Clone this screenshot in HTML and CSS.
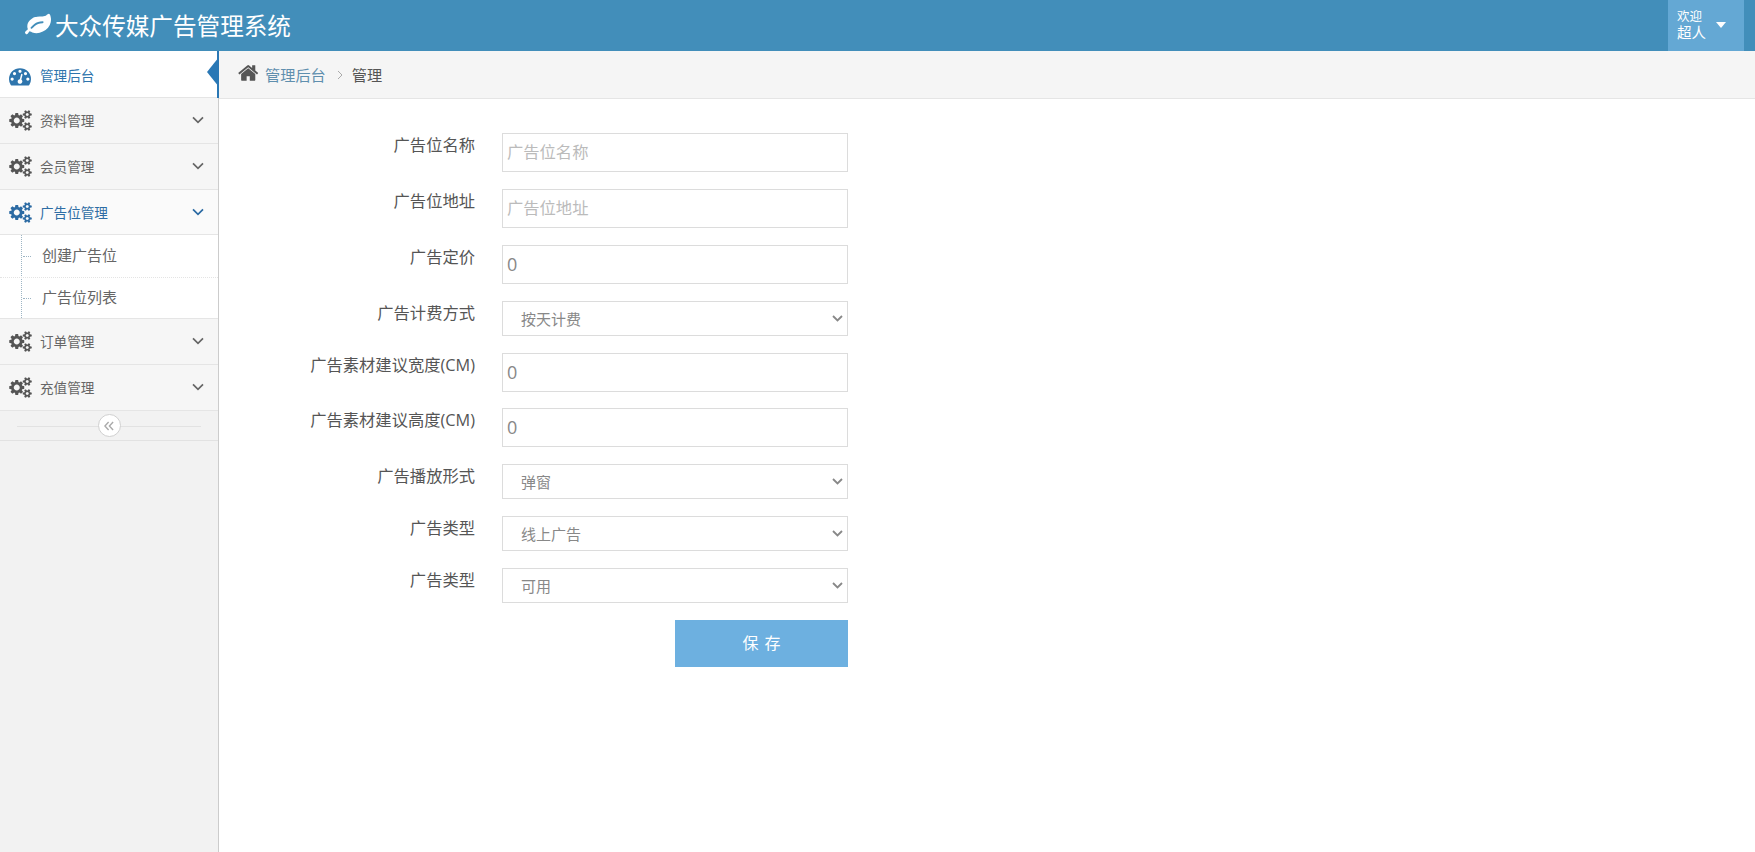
FILE: index.html
```html
<!DOCTYPE html>
<html lang="zh-CN">
<head>
<meta charset="utf-8">
<title>大众传媒广告管理系统</title>
<link rel="stylesheet" href="styles.css">
</head>
<body>
<header class="topbar">
  <div class="brand">
    <svg class="brand-leaf" viewBox="0 0 1792 1792"><path d="M1280 704q0-26-19-45t-45-19q-172 0-318 49.5t-259.5 134-235.5 219.5q-19 21-19 45 0 26 19 45t45 19q24 0 45-19 27-24 74-71t67-66q137-124 268.5-176t313.5-52q26 0 45-19t19-45zm512-198q0 95-20 193-46 224-184.5 383t-357.5 268q-214 108-438 108-148 0-286-47-15-5-88-42t-96-37q-16 0-39.5 32t-45 70-52.5 70-60 32q-30 0-51-11t-31-24-27-42q-2-4-6-11t-5.5-10-3-9.5-1.5-13.5q0-35 31-73.5t68-65.5 68-56 31-48q0-4-14-38t-16-44q-9-51-9-104 0-115 43.5-220t119-184.5 170.5-139 204-95.5q55-18 145-25.5t179.5-9 178.5-6 163.5-24 113.5-56.5l29.5-29.5 29.5-28 27-20 36.5-16 43.5-4.5q39 0 70.5 46t47.5 112 24 124 8 96z"/></svg>
    <span>大众传媒广告管理系统</span>
  </div>
  <div class="user">
    <div class="user-text"><span class="user-hi">欢迎</span><span class="user-name">超人</span></div>
    <span class="caret"></span>
  </div>
</header>
<div class="layout">
  <aside class="sidebar">
    <svg class="defs" width="0" height="0">
      <defs>
        <symbol id="cogs" viewBox="0 0 1920 1792"><path d="M896 896q0-106-75-181t-181-75-181 75-75 181 75 181 181 75 181-75 75-181zm768 512q0-52-38-90t-90-38-90 38-38 90q0 53 37.5 90.5t90.5 37.5 90.5-37.5 37.5-90.5zm0-1024q0-52-38-90t-90-38-90 38-38 90q0 53 37.5 90.5t90.5 37.5 90.5-37.5 37.5-90.5zm-384 421v185q0 10-7 19.5t-16 10.5l-155 24q-11 35-32 76 34 48 90 115 7 11 7 20 0 12-7 19-23 30-82.5 89.5t-78.5 59.5q-11 0-21-7l-115-90q-37 19-77 31-11 108-23 155-7 24-30 24h-186q-11 0-20-7.5t-10-17.5l-23-153q-34-10-75-31l-118 89q-7 7-20 7-11 0-21-8-144-133-144-160 0-9 7-19 10-14 41-53t47-61q-23-44-35-82l-152-24q-10-1-17-9.5t-7-19.5v-185q0-10 7-19.5t16-10.5l155-24q11-35 32-76-34-48-90-115-7-11-7-20 0-12 7-20 22-30 82-89t79-59q11 0 21 7l115 90q34-18 77-32 11-108 23-154 7-24 30-24h186q11 0 20 7.5t10 17.5l23 153q34 10 75 31l118-89q8-7 20-7 11 0 21 8 144 133 144 160 0 8-7 19-12 16-42 54t-45 60q23 48 34 82l152 23q10 2 17 10.5t7 19.5zm640 533v140q0 16-149 31-12 27-30 52 51 113 51 138 0 4-4 7-122 71-124 71-8 0-46-47t-52-68q-20 2-30 2t-30-2q-14 21-52 68t-46 47q-2 0-124-71-4-3-4-7 0-25 51-138-18-25-30-52-149-15-149-31v-140q0-16 149-31 13-29 30-52-51-113-51-138 0-4 4-7 4-2 35-20t59-34 30-16q8 0 46 46.5t52 67.5q20-2 30-2t30 2q51-71 92-112l6-2q4 0 124 70 4 3 4 7 0 25-51 138 17 23 30 52 149 15 149 31zm0-1024v140q0 16-149 31-12 27-30 52 51 113 51 138 0 4-4 7-122 71-124 71-8 0-46-47t-52-68q-20 2-30 2t-30-2q-14 21-52 68t-46 47q-2 0-124-71-4-3-4-7 0-25 51-138-18-25-30-52-149-15-149-31v-140q0-16 149-31 13-29 30-52-51-113-51-138 0-4 4-7 4-2 35-20t59-34 30-16q8 0 46 46.5t52 67.5q20-2 30-2t30 2q51-71 92-112l6-2q4 0 124 70 4 3 4 7 0 25-51 138 17 23 30 52 149 15 149 31z"/></symbol>
        <symbol id="chev" viewBox="0 0 12 8"><path d="M1 1.3 6 6.3 11 1.3" fill="none" stroke="currentColor" stroke-width="1.7"/></symbol>
      </defs>
    </svg>
    <nav>
      <a class="menu-item menu-home">
        <svg class="menu-icon" viewBox="0 0 1792 1792"><path d="M384 1152q0-53-37.5-90.5t-90.5-37.5-90.5 37.5-37.5 90.5 37.5 90.5 90.5 37.5 90.5-37.5 37.5-90.5zm192-448q0-53-37.5-90.5t-90.5-37.5-90.5 37.5-37.5 90.5 37.5 90.5 90.5 37.5 90.5-37.5 37.5-90.5zm428 481l101-382q6-26-7.5-48.5t-38.5-29.5-48 6.5-30 39.5l-101 382q-60 5-107 43.5t-63 98.5q-20 77 20 146t117 89 146-20 89-117q16-60-6-117t-72-91zm660-33q0-53-37.5-90.5t-90.5-37.5-90.5 37.5-37.5 90.5 37.5 90.5 90.5 37.5 90.5-37.5 37.5-90.5zm-640-640q0-53-37.5-90.5t-90.5-37.5-90.5 37.5-37.5 90.5 37.5 90.5 90.5 37.5 90.5-37.5 37.5-90.5zm448 192q0-53-37.5-90.5t-90.5-37.5-90.5 37.5-37.5 90.5 37.5 90.5 90.5 37.5 90.5-37.5 37.5-90.5zm320 448q0 261-141 483-19 29-54 29h-1402q-35 0-54-29-141-221-141-483 0-182 71-348t191-286 286-191 348-71 348 71 286 191 191 286 71 348z"/></svg>
        <span class="menu-text">管理后台</span>
        <span class="menu-arrow"></span>
      </a>
      <a class="menu-item"><svg class="menu-icon"><use href="#cogs"/></svg><span class="menu-text">资料管理</span><svg class="chev"><use href="#chev"/></svg></a>
      <a class="menu-item"><svg class="menu-icon"><use href="#cogs"/></svg><span class="menu-text">会员管理</span><svg class="chev"><use href="#chev"/></svg></a>
      <a class="menu-item menu-open"><svg class="menu-icon"><use href="#cogs"/></svg><span class="menu-text">广告位管理</span><svg class="chev"><use href="#chev"/></svg></a>
      <ul class="submenu">
        <li class="sub-item">创建广告位</li>
        <li class="sub-item">广告位列表</li>
      </ul>
      <a class="menu-item"><svg class="menu-icon"><use href="#cogs"/></svg><span class="menu-text">订单管理</span><svg class="chev"><use href="#chev"/></svg></a>
      <a class="menu-item"><svg class="menu-icon"><use href="#cogs"/></svg><span class="menu-text">充值管理</span><svg class="chev"><use href="#chev"/></svg></a>
    </nav>
    <div class="collapse">
      <span class="collapse-btn"><svg viewBox="0 0 10 10"><path d="M4.6 1 .9 5 4.6 9M9.1 1 5.4 5 9.1 9" fill="none" stroke="currentColor" stroke-width="1.4"/></svg></span>
    </div>
  </aside>
  <main class="main">
    <div class="crumbs">
      <svg class="crumb-home" viewBox="0 0 1792 1792"><path d="M1408 992v480q0 26-19 45t-45 19h-384v-384h-256v384h-384q-26 0-45-19t-19-45v-480q0-1 .5-3t.5-3l575-474 575 474q1 2 1 6zm223-69l-62 74q-8 9-21 11h-3q-13 0-21-7l-692-577-692 577q-12 8-24 7-13-2-21-11l-62-74q-8-10-7-23.5t11-21.5l719-599q32-26 76-26t76 26l244 204v-195q0-14 9-23t23-9h192q14 0 23 9t9 23v408l219 182q10 8 11 21.5t-7 23.5z"/></svg>
      <a class="crumb-link">管理后台</a>
      <svg class="crumb-sep" viewBox="0 0 6 10"><path d="M1 1 5 5 1 9" fill="none" stroke="currentColor" stroke-width="1"/></svg>
      <span class="crumb-current">管理</span>
    </div>
    <form class="form">
      <div class="row"><label class="label">广告位名称</label><input class="field" placeholder="广告位名称"></div>
      <div class="row"><label class="label">广告位地址</label><input class="field" placeholder="广告位地址"></div>
      <div class="row"><label class="label">广告定价</label><input class="field field-num" value="0"></div>
      <div class="row row-select"><label class="label">广告计费方式</label><select class="field select"><option>按天计费</option></select></div>
      <div class="row row-tight"><label class="label">广告素材建议宽度(CM)</label><input class="field field-num" value="0"></div>
      <div class="row"><label class="label">广告素材建议高度(CM)</label><input class="field field-num" value="0"></div>
      <div class="row row-select"><label class="label">广告播放形式</label><select class="field select"><option>弹窗</option></select></div>
      <div class="row row-select"><label class="label">广告类型</label><select class="field select"><option>线上广告</option></select></div>
      <div class="row row-select"><label class="label">广告类型</label><select class="field select"><option>可用</option></select></div>
      <div class="actions"><button class="save" type="button">保 存</button></div>
    </form>
  </main>
</div>
</body>
</html>
```

FILE: styles.css
```css
* { box-sizing: border-box; }
html, body { height: 100%; }
body {
  margin: 0;
  font-family: "Open Sans", "Noto Sans CJK SC", sans-serif;
  color: #555;
  background: #fff;
  overflow: hidden;
}
a { text-decoration: none; }
ul { list-style: none; margin: 0; padding: 0; }

.topbar {
  height: 51px;
  background: #428eba;
  display: flex;
  align-items: center;
  justify-content: space-between;
  padding: 0 11px 0 25px;
}
.brand {
  display: flex;
  align-items: center;
  color: #fff;
  font-size: 23.6px;
  gap: 4px;
  padding-bottom: 2px;
}
.brand-leaf { width: 26px; height: 26px; fill: #fff; }
.user {
  width: 76px;
  height: 51px;
  background: #64a8d4;
  color: #fff;
  display: flex;
  align-items: center;
  padding: 0 0 2px 9px;
  gap: 10px;
}
.user-text { display: flex; flex-direction: column; }
.user-hi { font-size: 12.5px; line-height: 15px; }
.user-name { font-size: 14.5px; line-height: 17px; }
.caret {
  width: 0;
  height: 0;
  border-left: 5.5px solid transparent;
  border-right: 5.5px solid transparent;
  border-top: 6px solid #fff;
}

.layout { display: flex; height: 801px; }
.sidebar {
  width: 219px;
  flex: none;
  background: #f2f2f2;
  border-right: 1px solid #ccc;
}
.defs { position: absolute; }
.menu-item {
  position: relative;
  display: flex;
  align-items: center;
  height: 46px;
  padding-left: 9px;
  background: #f6f6f6;
  border-bottom: 1px solid #e5e5e5;
  color: #666;
  font-size: 13.6px;
}
.menu-icon { width: 23px; height: 21px; fill: #555; flex: none; }
.menu-text { margin-left: 8px; padding-bottom: 1px; }
.chev { position: absolute; right: 14px; top: 18px; width: 12px; height: 8px; color: #666; }
.menu-home { height: 47px; background: #fff; color: #2e75ad; }
.menu-home::after {
  content: "";
  position: absolute;
  right: -1px;
  top: 0;
  bottom: -1px;
  width: 2px;
  background: #2a78b5;
}
.menu-home .menu-icon { width: 22px; height: 22px; fill: #2e75ad; margin: 3px 1px 0 0; }
.menu-home .menu-text { padding: 2px 0 0; }
.menu-arrow {
  position: absolute;
  right: -1px;
  top: 6px;
  width: 0;
  height: 0;
  border-top: 15px solid transparent;
  border-bottom: 15px solid transparent;
  border-right: 12px solid #2a78b5;
}
.menu-open { height: 45px; background: #fafafa; color: #2e6da4; }
.menu-open .menu-icon { fill: #2b6aa3; }
.menu-open .chev { color: #2b6aa3; }
.submenu {
  position: relative;
  background: #fff;
  border-bottom: 1px solid #e5e5e5;
}
.submenu::before {
  content: "";
  position: absolute;
  left: 21px;
  top: 0;
  bottom: 0;
  border-left: 1px dotted #9db5c4;
}
.sub-item {
  position: relative;
  height: 40px;
  display: flex;
  align-items: center;
  padding: 0 0 4px 42px;
  font-size: 15px;
  color: #666;
}
.sub-item:first-child { height: 43px; border-bottom: 1px dotted #e4e4e4; padding-bottom: 3px; }
.sub-item::before {
  content: "";
  position: absolute;
  left: 23px;
  top: 50%;
  width: 8px;
  border-top: 1px dotted #9db5c4;
}
.collapse {
  position: relative;
  height: 30px;
  display: flex;
  align-items: center;
  justify-content: center;
  border-bottom: 1px solid #e2e2e2;
}
.collapse::before {
  content: "";
  position: absolute;
  left: 17px;
  right: 17px;
  top: 15px;
  border-top: 1px solid #e2e2e2;
}
.collapse-btn {
  position: relative;
  width: 23px;
  height: 23px;
  border-radius: 50%;
  background: #fff;
  border: 1px solid #d0d0d0;
  color: #aaa;
  display: flex;
  align-items: center;
  justify-content: center;
}
.collapse-btn svg { width: 10px; height: 10px; }

.main { flex: 1; min-width: 0; }
.crumbs {
  height: 48px;
  background: #f5f5f5;
  border-bottom: 1px solid #e5e5e5;
  display: flex;
  align-items: center;
  padding: 0 0 2px 19px;
  font-size: 15.2px;
}
.crumb-home { width: 22px; height: 22px; fill: #555; margin-right: 5px; margin-top: -2px; }
.crumb-link { color: #5f8fae; }
.crumb-sep { width: 6px; height: 10px; margin: 2px 9px 0 11px; color: #aaa; }
.crumb-current { color: #555; }

.form { padding-top: 34px; }
.row {
  display: flex;
  height: 39px;
  margin-bottom: 17px;
}
.row-select { height: 35px; }
.row-tight { margin-bottom: 16px; }
.label {
  width: 256px;
  flex: none;
  text-align: right;
  font-size: 16.3px;
  line-height: 24px;
  color: #555;
}
.field {
  width: 346px;
  margin-left: 27px;
  height: 100%;
  border: 1px solid #dcdcdc;
  background: #fff;
  padding: 0 4px 1px;
  font-family: "Open Sans", "Noto Sans CJK SC", sans-serif;
  font-size: 16.3px;
  color: #888;
  border-radius: 0;
  outline: none;
}
.field-num { font-size: 18px; padding-bottom: 2px; }
.field::placeholder { color: #bbb; opacity: 1; }
.select {
  appearance: none;
  font-size: 15px;
  padding: 0 4px 0 18px;
  background: #fff url("data:image/svg+xml,%3Csvg xmlns='http://www.w3.org/2000/svg' viewBox='0 0 11 7'%3E%3Cpath d='M1 1 5.5 5.5 10 1' fill='none' stroke='%23888' stroke-width='1.8'/%3E%3C/svg%3E") no-repeat right 4px center / 11px 7px;
}
.actions { width: 629px; display: flex; justify-content: flex-end; }
.save {
  width: 173px;
  height: 47px;
  border: 0;
  background: #6db0e0;
  color: #fff;
  font-family: "Open Sans", "Noto Sans CJK SC", sans-serif;
  font-size: 16px;
  letter-spacing: 1px;
  padding: 0 0 3px 1px;
}
```
